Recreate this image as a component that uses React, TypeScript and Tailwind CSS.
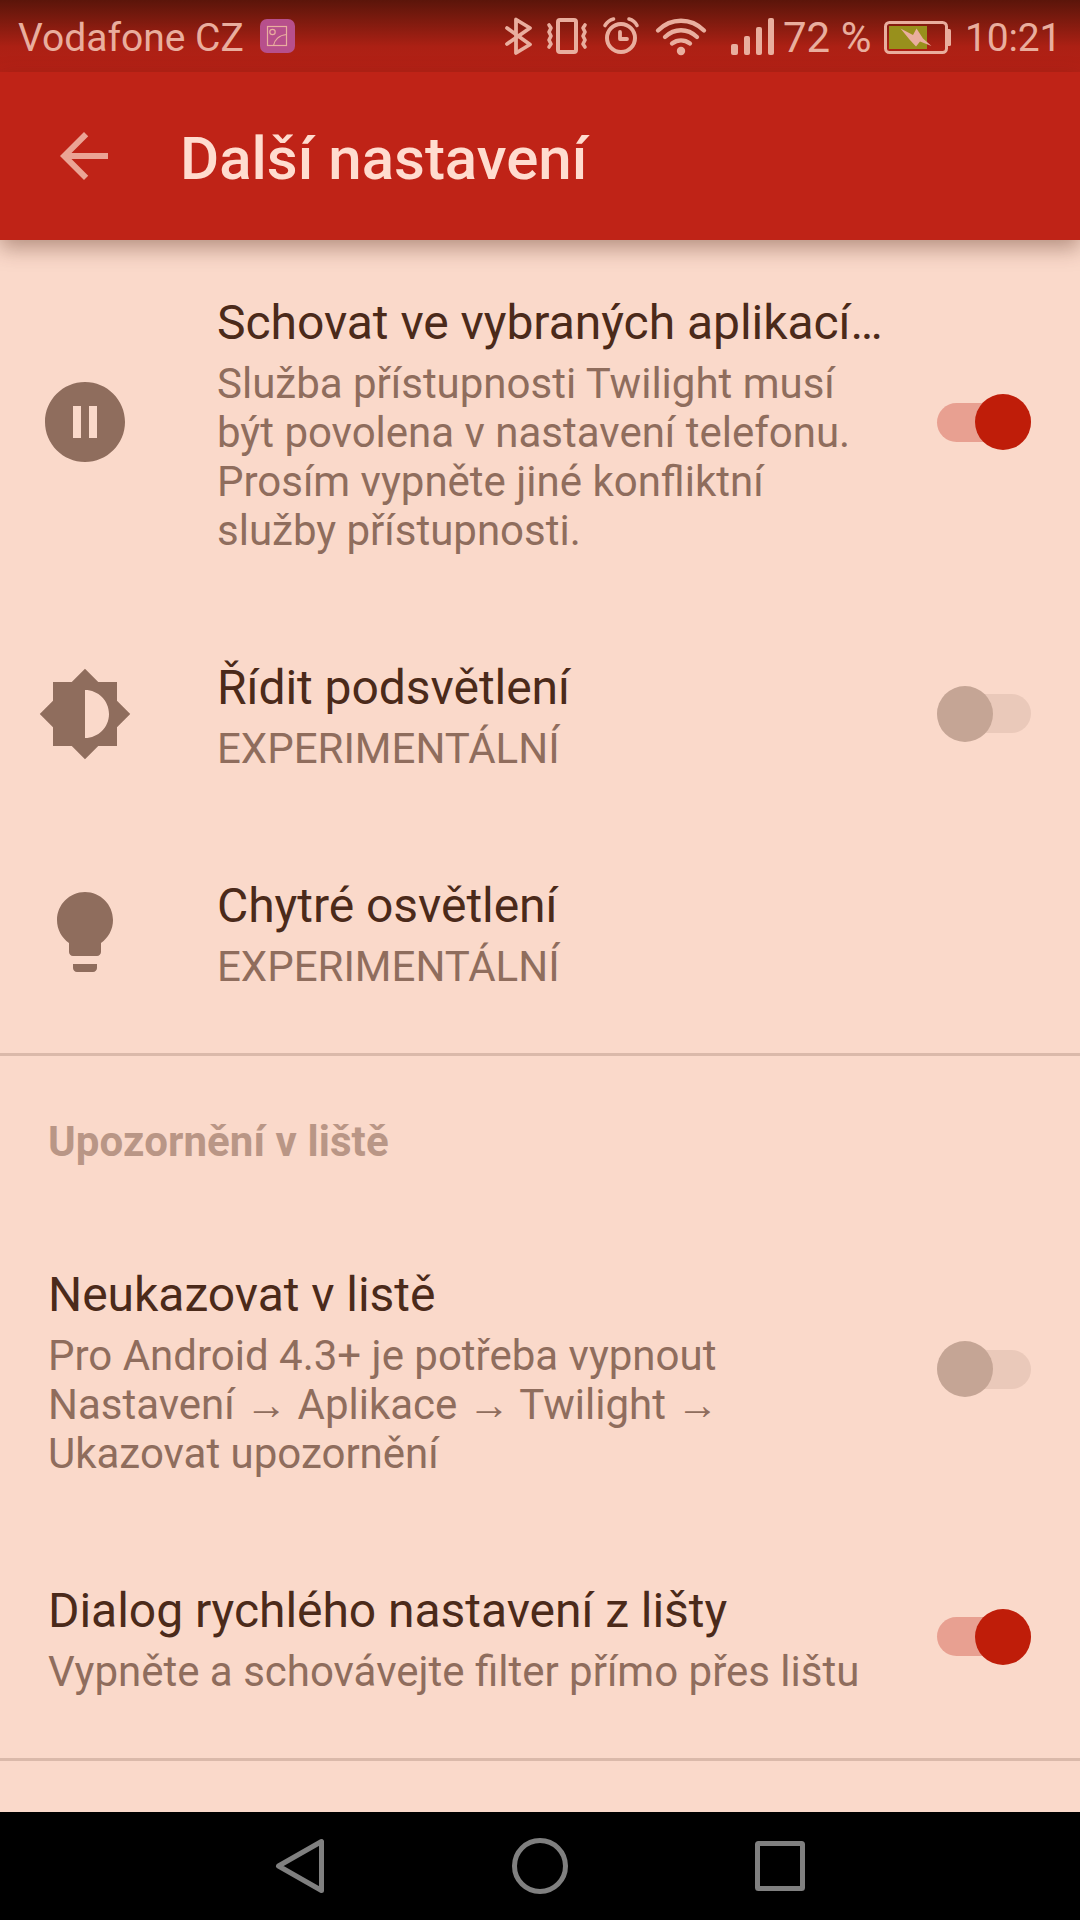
import type { ReactNode } from "react";

function StatusBar() {
  return (
    <header className="flex h-[72px] shrink-0 items-center bg-linear-to-b from-[#5b150a] via-[#ac2014] via-65% to-[#b52116] text-[#e9ae9e]">
      <div className="ml-[18px] w-[228px] pt-[4px] text-[39px] leading-[72px] whitespace-nowrap">Vodafone CZ</div>
      <svg className="ml-[14px] h-[34px] w-[35px]" viewBox="0 0 35 34" fill="none" stroke="#e9ae9e" strokeWidth="1.2">
        <rect width="35" height="34" rx="7" fill="#b74f8c" stroke="none" />
        <rect x="7.5" y="7.5" width="19" height="19" />
        <circle cx="12.5" cy="13" r="2.7" />
        <path d="M13.5 26.5C14.5 21 19 16 26.5 15.5" />
      </svg>
      <svg className="ml-auto h-[72px] w-[272px]" viewBox="502 0 272 72" fill="none" stroke="#e9ae9e" strokeLinecap="round" strokeLinejoin="round">
        <path d="M507 28L530 44.5L516 53V19.5L530 28L507 44" strokeWidth="3.8" />
        <rect x="558" y="20" width="18" height="32" rx="2" strokeWidth="4" />
        <path d="M549 25l2 3-2 4 2 4-2 4 2 4-2 3M585 25l-2 3 2 4-2 4 2 4-2 4 2 3" strokeWidth="3.6" />
        <circle cx="621" cy="38" r="14" strokeWidth="4" />
        <path d="M620 32v7h7" strokeWidth="3.8" />
        <path d="M605 25.5Q608 20.5 613.5 19M629 19Q634.5 20.5 637 25.5" strokeWidth="3.6" />
        <path d="M658 30.5C671 17.5 691 17.5 704 30.5M665 37C674.5 28 687.5 28 697 37M672 43.5C677.5 39.5 684.5 39.5 690 43.5" strokeWidth="4.3" />
        <circle cx="681" cy="51" r="4.2" fill="#e9ae9e" stroke="none" />
        <g fill="#e9ae9e" stroke="none">
          <rect x="731" y="44" width="7" height="11" rx="2" />
          <rect x="744" y="36" width="6" height="19" rx="2" />
          <rect x="756" y="27" width="6" height="28" rx="2" />
          <rect x="768" y="18" width="6" height="37" rx="2" />
        </g>
      </svg>
      <div className="ml-[9px] w-[90px] pt-[3px] text-[42px] leading-[72px] whitespace-nowrap">72 %</div>
      <svg className="ml-[11px] h-[72px] w-[67px]" viewBox="884 0 67 72">
        <rect x="889" y="26" width="38" height="23" fill="#98901c" />
        <rect x="885.5" y="22.5" width="61" height="30" rx="4" fill="none" stroke="#e9ae9e" strokeWidth="3" />
        <path d="M947.5 29h2a1.5 1.5 0 0 1 1.5 1.5v14a1.5 1.5 0 0 1-1.5 1.500h-2z" fill="#e9ae9e" />
        <path d="M900.5 28.5L913 35L916.500 28.500L923 38.500L931.500 46L920 41.500L916 46.500L909.500 39.500z" fill="#e9ae9e" />
      </svg>
      <div className="mr-[21px] ml-[14px] w-[94px] pt-[4px] text-[39px] leading-[72px] tracking-[-0.2px] whitespace-nowrap">10:21</div>
    </header>
  );
}

function Toggle({ on }: { on: boolean }) {
  return on ? (
    <span className="flex h-[39px] w-[93.5px] items-center justify-end rounded-full bg-[#e8a091]">
      <span className="h-[56px] w-[56px] shrink-0 rounded-full bg-[#bf1d09]" />
    </span>
  ) : (
    <span className="flex h-[39px] w-[93.5px] items-center rounded-full bg-[#eac9ba]">
      <span className="h-[56px] w-[56px] shrink-0 rounded-full bg-[#c5a595]" />
    </span>
  );
}

type RowProps = { className: string; icon?: ReactNode; title: string; lines: string[]; on?: boolean };

function Row({ className, icon, title, lines, on }: RowProps) {
  return (
    <section className={className}>
      {icon && (
        <svg className="mr-[84px] ml-[-11px] h-[96px] w-[96px] shrink-0" viewBox="0 0 24 24" fill="#8f6d5d">
          {icon}
        </svg>
      )}
      <div className="flex-1 pt-[6px] whitespace-nowrap">
        <h2 className="text-[48px] leading-[56px] tracking-[-0.04px] text-[#4b2a1a]">{title}</h2>
        <p className="mt-[8px] text-[42px] leading-[49px] text-[#8f6d5d]">
          {lines.map((l) => (
            <span className="block" key={l}>{l}</span>
          ))}
        </p>
      </div>
      {on !== undefined && <Toggle on={on} />}
    </section>
  );
}

export default function App() {
  return (
    <div className="flex h-[1920px] w-[1080px] flex-col overflow-hidden bg-[#fad9ca] font-['Roboto',sans-serif]">
      <StatusBar />
      <div className="relative z-10 flex h-[168px] shrink-0 items-center bg-[#bf2317] pl-[48px] shadow-[0_8px_20px_rgba(70,25,10,0.38)]">
        <svg className="h-[72px] w-[72px]" viewBox="0 0 24 24" fill="#eba495">
          <path d="M20 11H7.830l5.590-5.590L12 4l-8 8 8 8 1.410-1.410L7.830 13H20v-2z" />
        </svg>
        <h1 className="ml-[60px] pt-[5px] text-[60px] leading-[72px] font-medium text-[#ffdccf]">Další nastavení</h1>
      </div>
      <main className="h-[1572px] shrink-0">
        <Row
          className="flex h-[364px] items-center pr-[49.5px] pl-[48px]"
          title="Schovat ve vybraných aplikací…"
          lines={["Služba přístupnosti Twilight musí", "být povolena v nastavení telefonu.", "Prosím vypněte jiné konfliktní", "služby přístupnosti."]}
          on={true}
          icon={<path d="M12 2C6.480 2 2 6.480 2 12s4.480 10 10 10 10-4.480 10-10S17.520 2 12 2zm-1 14H9V8h2v8zm4 0h-2V8h2v8z" />}
        />
        <Row
          className="flex h-[219px] items-center pr-[49.5px] pl-[48px]"
          title="Řídit podsvětlení"
          lines={["EXPERIMENTÁLNÍ"]}
          on={false}
          icon={<path d="M20 15.310L23.310 12 20 8.690V4h-4.690L12 .690 8.690 4H4v4.690L.690 12 4 15.310V20h4.690L12 23.310 15.310 20H20v-4.690zM12 18V6c3.310 0 6 2.690 6 6s-2.690 6-6 6z" />}
        />
        <Row
          className="flex h-[217px] items-center pr-[49.5px] pl-[48px]"
          title="Chytré osvětlení"
          lines={["EXPERIMENTÁLNÍ"]}
          icon={<path d="M9 21c0 .550.450 1 1 1h4c.550 0 1-.450 1-1v-1H9v1zm3-19C8.140 2 5 5.140 5 9c0 2.380 1.190 4.470 3 5.740V17c0 .550.450 1 1 1h6c.550 0 1-.450 1-1v-2.260c1.810-1.270 3-3.360 3-5.740 0-3.860-3.140-7-7-7z" />}
        />
        <div className="mt-[13px] h-[3px] bg-[#dab9aa]" />
        <h3 className="mt-[61px] pl-[48px] text-[42px] leading-[49px] font-bold tracking-[0.1px] text-[#b99686]">Upozornění v liště</h3>
        <Row
          className="mt-[71px] flex h-[264px] items-center pr-[49.5px] pl-[48px]"
          title="Neukazovat v listě"
          lines={["Pro Android 4.3+ je potřeba vypnout", "Nastavení → Aplikace → Twilight →", "Ukazovat upozornění"]}
          on={false}
        />
        <Row
          className="mt-[26px] flex h-[219px] items-center pr-[49.5px] pl-[48px]"
          title="Dialog rychlého nastavení z lišty"
          lines={["Vypněte a schovávejte filter přímo přes lištu"]}
          on={true}
        />
        <div className="mt-[12px] h-[3px] bg-[#dab9aa]" />
      </main>
      <nav className="flex h-[108px] shrink-0 items-center justify-center gap-[182px] bg-black">
        <svg className="h-[60px] w-[60px]" viewBox="0 0 60 60" fill="none" stroke="#808080" strokeWidth="5" strokeLinejoin="round">
          <path d="M53.5 5.5V54.5L10.5 30z" />
        </svg>
        <svg className="h-[60px] w-[60px]" viewBox="0 0 60 60" fill="none" stroke="#808080" strokeWidth="5">
          <circle cx="30" cy="30" r="25.5" />
        </svg>
        <svg className="h-[60px] w-[60px]" viewBox="0 0 60 60" fill="none" stroke="#808080" strokeWidth="5" strokeLinejoin="round">
          <rect x="5.5" y="7.5" width="45" height="45" rx="1" />
        </svg>
      </nav>
    </div>
  );
}
